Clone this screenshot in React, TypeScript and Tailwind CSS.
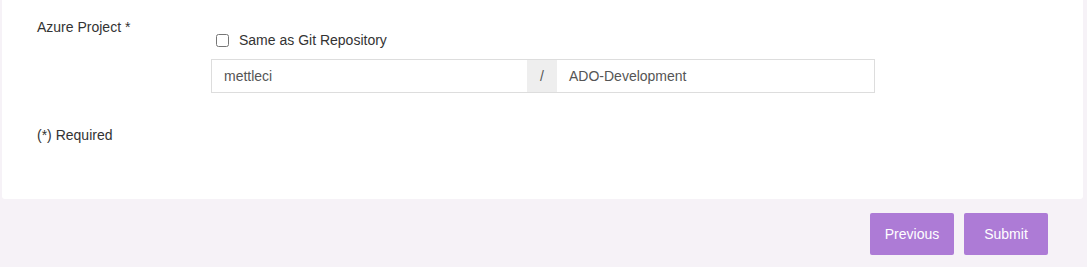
import React from 'react';

export default function App(): JSX.Element {
  return (
    <div className="w-[1087px] h-[267px] bg-[#f6f2f7] flex flex-col text-[14px] text-[#333] font-['Liberation_Sans',Arial,sans-serif]">
      <div className="ml-[2px] mr-[4px] h-[199px] bg-white rounded-b-[3px] pl-[35px] pt-[17px]">
        <div className="flex">
          <div className="w-[174px] leading-[20px]">Azure Project *</div>
          <div className="pt-[15px]">
            <label className="flex items-center h-[16px] pl-[5px] gap-[10px]">
              <input type="checkbox" className="w-[13px] h-[13px] m-0" />
              <span className="leading-[16px]">Same as Git Repository</span>
            </label>
            <div className="mt-[11px] flex w-[664px] h-[34px] text-[#555]">
              <div className="w-[316px] border border-[#ddd] border-r-0 flex items-center px-[12px]">mettleci</div>
              <div className="w-[30px] bg-[#eee] border-y border-[#ddd] flex items-center justify-center">/</div>
              <div className="flex-1 border border-[#ddd] border-l-0 flex items-center px-[12px]">ADO-Development</div>
            </div>
          </div>
        </div>
        <div className="mt-[32px] leading-[20px]">(*) Required</div>
      </div>
      <div className="flex justify-end gap-[10px] pr-[39px] pt-[14px]">
        <button className="w-[84px] h-[42px] bg-[#ad7bd6] text-white rounded-[2px]">Previous</button>
        <button className="w-[84px] h-[42px] bg-[#ad7bd6] text-white rounded-[2px]">Submit</button>
      </div>
    </div>
  );
}
